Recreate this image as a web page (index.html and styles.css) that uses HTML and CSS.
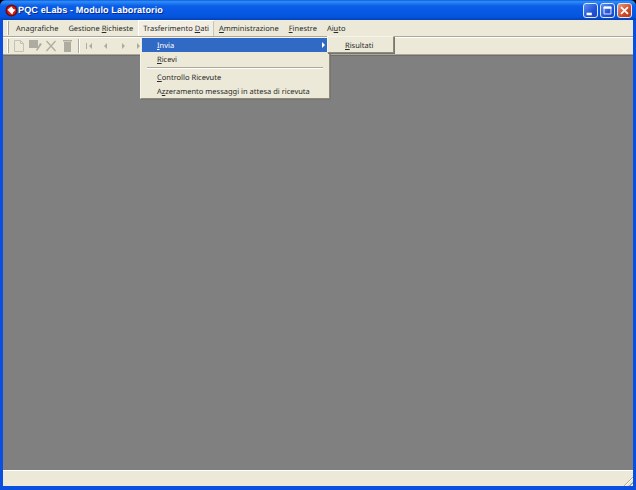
FILE: index.html
```html
<!DOCTYPE html>
<html lang="it">
<head>
<meta charset="utf-8">
<title>PQC eLabs - Modulo Laboratorio</title>
<link rel="stylesheet" href="styles.css">
</head>
<body>
<div class="window">
  <header class="titlebar">
    <svg class="appicon" width="13" height="13" viewBox="0 0 16 16"><circle cx="8" cy="8" r="7.500" fill="#6a0c0c"/><circle cx="8" cy="8" r="5.500" fill="#d92020"/><path d="M3 7l5-4 2 3 3 1-3 3-1 3-3-3z" fill="#fff"/></svg>
    <span class="title">PQC eLabs - Modulo Laboratorio</span>
    <div class="caption">
      <button class="capbtn"><svg width="15" height="15" viewBox="0 0 15 15"><rect x="3" y="10" width="6" height="3" fill="#fff"/></svg></button>
      <button class="capbtn"><svg width="15" height="15" viewBox="0 0 15 15"><path d="M3.500 3.500h8v8h-8z" fill="none" stroke="#fff"/><rect x="3" y="3" width="9" height="2.500" fill="#fff"/></svg></button>
      <button class="capbtn close"><svg width="15" height="15" viewBox="0 0 15 15"><path d="M3.500 3.500l8 8M11.500 3.500l-8 8" stroke="#fff" stroke-width="2"/></svg></button>
    </div>
  </header>
  <div class="client">
    <nav class="menubar">
      <span class="grip"></span>
      <span class="mi">Anagrafiche</span>
      <span class="mi">Gestione <u>R</u>ichieste</span>
      <span class="mi open">Trasferimento <u>D</u>ati</span>
      <span class="mi"><u>A</u>mministrazione</span>
      <span class="mi"><u>F</u>inestre</span>
      <span class="mi">Ai<u>u</u>to</span>
    </nav>
    <div class="toolbar">
      <span class="grip"></span>
      <svg class="tool" width="16" height="16" viewBox="0 0 16 16"><path d="M3.500 2.500h6l3 3v8h-9z M9.500 2.500v3h3" fill="none" stroke="#c4c2b6"/></svg>
      <svg class="tool" width="16" height="16" viewBox="0 0 16 16"><rect x="2" y="2" width="9" height="8" fill="#aeaca0"/><path d="M10 13l5-7-2-1-4 7z" fill="#aeaca0"/></svg>
      <svg class="tool" width="16" height="16" viewBox="0 0 16 16"><path d="M3.500 3l9 10M12.500 3l-9 10" stroke="#aeaca0" stroke-width="1.300"/></svg>
      <svg class="tool" width="16" height="16" viewBox="0 0 16 16"><path d="M5 4h7v10H5z M4 2h9v1.500H4z" fill="#aeaca0"/></svg>
      <span class="sep"></span>
      <svg class="nav" width="16" height="16" viewBox="0 0 16 16"><path d="M5 5h1v6H5zM11 5v6L8 8z" fill="#aeaca0"/></svg>
      <svg class="nav" width="16" height="16" viewBox="0 0 16 16"><path d="M9 5v6L6 8z" fill="#aeaca0"/></svg>
      <svg class="nav" width="16" height="16" viewBox="0 0 16 16"><path d="M7 5v6l3-3z" fill="#aeaca0"/></svg>
      <svg class="nav" width="16" height="16" viewBox="0 0 16 16"><path d="M5 5v6l3-3z" fill="#aeaca0"/></svg>
    </div>
    <main class="workspace"></main>
    <footer class="statusbar"><span class="resize"></span></footer>
  </div>
  <div class="menu primary">
    <div class="entry active"><span><u>I</u>nvia</span><i class="arrow"></i></div>
    <div class="entry"><span><u>R</u>icevi</span></div>
    <div class="rule"></div>
    <div class="entry"><span><u>C</u>ontrollo Ricevute</span></div>
    <div class="entry"><span>A<u>z</u>zeramento messaggi in attesa di ricevuta</span></div>
  </div>
  <div class="menu secondary">
    <div class="entry"><span><u>R</u>isultati</span></div>
  </div>
</div>
</body>
</html>
```
FILE: styles.css
```css
* { box-sizing: border-box; }
html, body { margin: 0; height: 100%; }
body { font-family: "Noto Sans", "Liberation Sans", sans-serif; font-size: 7.500px; text-rendering: geometricPrecision; color: #2a2a2a; background: #000; overflow: hidden; }
.window { position: relative; width: 636px; height: 490px; display: flex; flex-direction: column; background: #0a4fe0; border-radius: 6px 6px 0 0; overflow: hidden; }
.titlebar { height: 20px; flex: none; display: flex; align-items: center; padding: 0 4px 0 5px; background: linear-gradient(#0a5be6 0, #2f8cf5 8%, #0a5ee8 30%, #0454df 85%, #0440b0 100%); }
.appicon { flex: none; }
.title { font-family: "Liberation Sans", sans-serif; font-size: 9.100px; font-weight: bold; letter-spacing: 0.100px; color: #fff; text-shadow: 1px 1px 0 #0a2a90; }
.caption { margin-left: auto; display: flex; gap: 2px; }
.capbtn { width: 15px; height: 15px; padding: 0; border: 1px solid #dfe8fb; border-radius: 3px; background: linear-gradient(135deg, #5c8ff0, #2354d8 60%, #1a47c0); display: flex; align-items: center; justify-content: center; overflow: hidden; }
.capbtn svg { width: 13px; height: 13px; flex: none; }
.capbtn.close { background: linear-gradient(135deg, #e89a80, #d04a28 60%, #b83a1c); }
.client { flex: 1; display: flex; flex-direction: column; margin: 0 3px 4px; background: #ece9d8; min-height: 0; }
.menubar { height: 17px; flex: none; display: flex; align-items: center; padding-left: 4px; border-bottom: 1px solid #aca899; }
.grip { width: 2px; height: 14px; flex: none; border-left: 1px solid #fff; border-right: 1px solid #aca899; margin-right: 2px; }
.mi { height: 16px; padding: 2px 5px 0; line-height: 14px; white-space: nowrap; }
.mi.open { background: #f2efe2; box-shadow: inset 1px 1px 0 #fff, inset -1px 0 0 #c8c5b6; }
.toolbar { height: 18px; flex: none; display: flex; align-items: center; padding-left: 4px; border-top: 1px solid #fff; border-bottom: 1px solid #aca899; }
.tool { flex: none; }
.nav { margin-right: 1px; flex: none; }
.sep { width: 2px; height: 14px; flex: none; border-left: 1px solid #aca899; border-right: 1px solid #fff; margin: 0 1px 0 3px; }
.workspace { flex: 1; background: #808080; border-top: 1px solid #6e6e6e; min-height: 0; }
.statusbar { position: relative; height: 16px; flex: none; border-top: 1px solid #fff; }
.resize { position: absolute; right: 0; bottom: 0; width: 12px; height: 12px; background: repeating-linear-gradient(135deg, transparent 0 2px, #aca899 2px 3px, #fff 3px 4px); clip-path: polygon(100% 0, 100% 100%, 0 100%); }
.menu { position: absolute; background: #ece9d8; border: 1px solid; border-color: #f5f3ea #8d8b80 #8d8b80 #f5f3ea; box-shadow: 1px 1px 0 #77756c; padding: 0 1px; }
.primary { left: 140px; top: 37px; width: 190px; height: 62px; }
.secondary { left: 327px; top: 36px; width: 67px; height: 17px; padding-top: 1px; }
.entry { position: relative; height: 14px; padding-top: 1px; line-height: 14px; padding-left: 15px; white-space: nowrap; }
.entry.active { background: #316ac5; color: #fff; }
.secondary .entry { padding-left: 16px; }
.rule { height: 2px; margin: 1px 5px; border-top: 1px solid #aca899; border-bottom: 1px solid #fff; }
.arrow { position: absolute; right: 3px; top: 4px; width: 0; height: 0; border-left: 3px solid #fff; border-top: 3px solid transparent; border-bottom: 3px solid transparent; }
```
